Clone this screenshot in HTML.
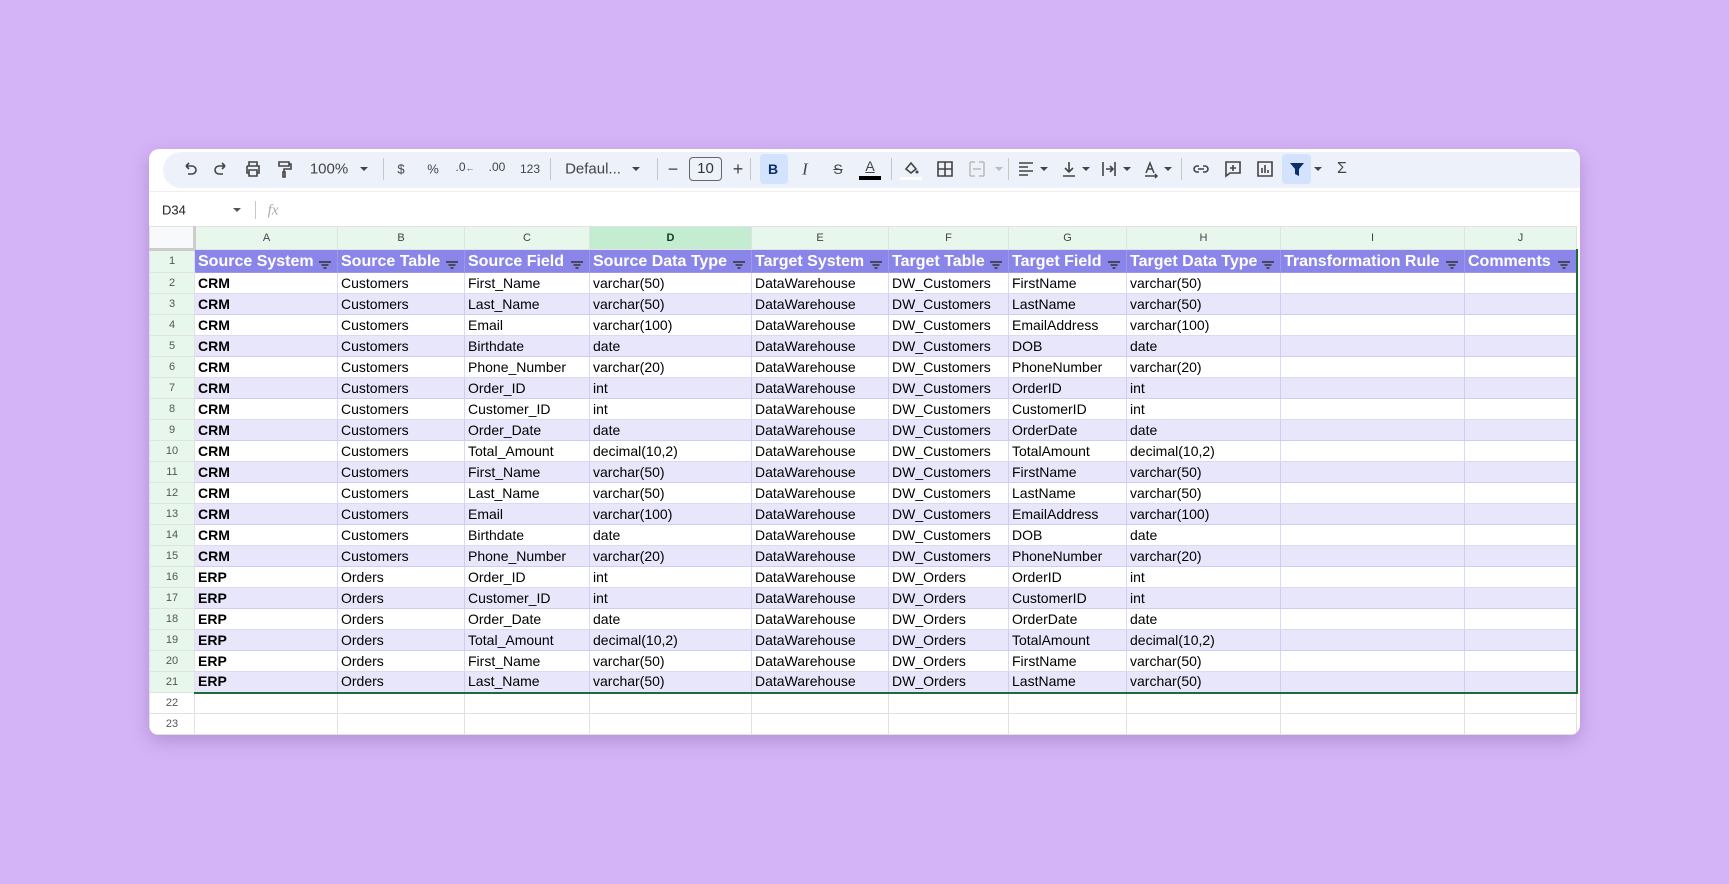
<!DOCTYPE html>
<html><head><meta charset="utf-8"><style>
*{margin:0;padding:0;box-sizing:border-box}
body{width:1729px;height:884px;background:#d4b4f6;font-family:"Liberation Sans",Arial,sans-serif;position:relative;overflow:hidden}
.win{position:absolute;left:149px;top:149px;width:1431px;height:586px;background:#fff;border-radius:10px;overflow:hidden;box-shadow:0 6px 18px rgba(80,40,120,.25)}
.pill{position:absolute;left:14px;top:3px;width:1430px;height:36px;background:#edf1fa;border-radius:18px}
.t{position:absolute;top:20px;transform:translate(-50%,-50%);color:#444;font-size:14px;line-height:1;white-space:nowrap}
.sep{position:absolute;top:9px;width:1px;height:22px;background:#c7c7c7}
.arr{position:absolute;top:18px;width:0;height:0;border-left:4px solid transparent;border-right:4px solid transparent;border-top:4px solid #444;transform:translateX(-50%)}
svg.i{position:absolute;top:10px;width:20px;height:20px;transform:translateX(-50%)}
table{position:absolute;left:0;top:77px;border-collapse:collapse;table-layout:fixed;font-size:14px}
td{height:21px;border:1px solid #e2e2e2;padding:0 3px;white-space:nowrap;overflow:hidden;color:#000;line-height:19px}
td.rh{text-align:center;font-size:11px;color:#555;background:#e7f7ec;padding:0}
tr.ch td{height:23px;background:#e7f7ec;text-align:center;font-size:11px;color:#444}
tr.h td{height:23px;background:#8a86e9;color:#fff;font-weight:bold;font-size:16px;border-color:#9d99ea;position:relative}
tr.h td.rh{color:#555;font-weight:normal;font-size:11px;background:#e7f7ec;border-color:#e2e2e2}
tr.h td span.f{position:absolute;right:6px;top:6px;width:12px;height:10px}
tr.a td{background:#fff;border-color:#dcdaf2}
tr.b td{background:#e8e6fb;border-color:#cfccf1}
tr.a td.rh,tr.b td.rh{background:#e7f7ec;border-color:#e2e2e2}
td.bo{font-weight:bold}
tr.e td{background:#fff}
tr.e td.rh{background:#fff}
</style></head><body>
<div class="win">
<div class="pill"></div>
<svg class="i" style="left:41px" viewBox="0 0 20 20"><path d="M6 7h6a4 4 0 010 8H8M6 7l3-3M6 7l3 3" fill="none" stroke="#444" stroke-width="1.6"/></svg>
<svg class="i" style="left:72px" viewBox="0 0 20 20"><path d="M14 7H8a4 4 0 000 8h4M14 7l-3-3M14 7l-3 3" fill="none" stroke="#444" stroke-width="1.6"/></svg>
<svg class="i" style="left:104px" viewBox="0 0 20 20"><path d="M6 7V3h8v4M4 7h12v7h-2M6 14H4V7M6 11h8v6H6z" fill="none" stroke="#444" stroke-width="1.6"/></svg>
<svg class="i" style="left:135px" viewBox="0 0 20 20"><path d="M5 3h10v4H5zM15 5h2v5h-7v3M9 13h2v5H9z" fill="none" stroke="#444" stroke-width="1.6"/></svg>
<div class="t" style="left:180px;font-size:15px">100%</div><div class="arr" style="left:215px"></div>
<div class="sep" style="left:234px"></div>
<div class="t" style="left:252px;font-size:13px">$</div>
<div class="t" style="left:284px;font-size:13px">%</div>
<div class="t" style="left:316px;font-size:12px;top:18px">.0<span style="font-size:9px">←</span></div>
<div class="t" style="left:348px;font-size:12px;top:18px">.00</div>
<div class="t" style="left:381px;font-size:12px">123</div>
<div class="sep" style="left:401px"></div>
<div class="t" style="left:444px;font-size:15px">Defaul...</div><div class="arr" style="left:487px"></div>
<div class="sep" style="left:508px"></div>
<div class="t" style="left:524px;font-size:18px">−</div>
<div style="position:absolute;left:540px;top:8px;width:33px;height:24px;border:1px solid #666;border-radius:4px;font-size:15px;text-align:center;line-height:22px;color:#333">10</div>
<div class="t" style="left:589px;font-size:18px">+</div>
<div class="sep" style="left:601px"></div>
<div style="position:absolute;left:611px;top:5px;width:28px;height:30px;background:#d3e3fd;border-radius:4px"></div>
<div class="t" style="left:624px;font-weight:bold;font-size:14px;color:#0b2f6b">B</div>
<div class="t" style="left:656px;font-style:italic;font-family:'Liberation Serif',serif;font-size:17px">I</div>
<div class="t" style="left:689px;text-decoration:line-through;font-size:14px">S</div>
<div class="t" style="left:721px;font-size:14px;top:17px;text-decoration:underline">A</div>
<div style="position:absolute;left:710px;top:27px;width:22px;height:4px;background:#000"></div>
<div class="sep" style="left:742px"></div>
<svg class="i" style="left:762px" viewBox="0 0 20 20"><path d="M5 10l5-6 5 6-5 4z" fill="none" stroke="#444" stroke-width="1.6"/><circle cx="16" cy="13" r="1.5" fill="#444"/></svg>
<div style="position:absolute;left:751px;top:28px;width:22px;height:3px;background:#fff"></div>
<svg class="i" style="left:796px" viewBox="0 0 20 20"><path d="M3 3h14v14H3zM10 3v14M3 10h14" fill="none" stroke="#444" stroke-width="1.6"/></svg>
<svg class="i" style="left:828px" viewBox="0 0 20 20"><path d="M3 3h5M12 3h5M3 17h5M12 17h5M3 3v14M17 3v14M6 10h8" fill="none" stroke="#bbb" stroke-width="1.5"/></svg>
<div class="arr" style="left:850px;border-top-color:#bbb"></div>
<div class="sep" style="left:859px"></div>
<svg class="i" style="left:877px" viewBox="0 0 20 20"><path d="M3 4h14M3 8h9M3 12h14M3 16h9" fill="none" stroke="#444" stroke-width="1.6"/></svg><div class="arr" style="left:895px"></div>
<svg class="i" style="left:920px" viewBox="0 0 20 20"><path d="M10 3v10M6 9l4 4 4-4M4 17h12" fill="none" stroke="#444" stroke-width="1.6"/></svg><div class="arr" style="left:937px"></div>
<svg class="i" style="left:960px" viewBox="0 0 20 20"><path d="M4 3v14M16 3v14M7 10h6M11 7l3 3-3 3" fill="none" stroke="#444" stroke-width="1.6"/></svg><div class="arr" style="left:978px"></div>
<svg class="i" style="left:1002px" viewBox="0 0 20 20"><path d="M5 14l4-10 4 10M6.5 10h5M4 17h12M14 15l2 2-2 2" fill="none" stroke="#444" stroke-width="1.5"/></svg><div class="arr" style="left:1019px"></div>
<div class="sep" style="left:1032px"></div>
<svg class="i" style="left:1052px" viewBox="0 0 20 20"><path d="M8 7H6a3 3 0 000 6h2M12 7h2a3 3 0 010 6h-2M7 10h6" fill="none" stroke="#444" stroke-width="1.6"/></svg>
<svg class="i" style="left:1084px" viewBox="0 0 20 20"><path d="M3 3h14v11H7l-4 3zM10 6v6M7 9h6" fill="none" stroke="#444" stroke-width="1.6"/></svg>
<svg class="i" style="left:1116px" viewBox="0 0 20 20"><path d="M3 3h14v14H3zM7 14V9M10 14V6M13 14v-3" fill="none" stroke="#444" stroke-width="1.6"/></svg>
<div style="position:absolute;left:1133px;top:5px;width:29px;height:30px;background:#d3e3fd;border-radius:4px"></div>
<svg class="i" style="left:1148px" viewBox="0 0 20 20"><path d="M3 4h14l-5 6v7l-4-2v-5z" fill="#0b2f6b"/></svg><div class="arr" style="left:1169px"></div>
<div class="t" style="left:1193px;font-size:16px">Σ</div>
<div style="position:absolute;left:0;top:42px;width:100%;height:1px;background:#eee"></div>
<div class="t" style="left:13px;top:61px;transform:translate(0,-50%);font-size:13px;color:#222">D34</div>
<div class="arr" style="left:88px;top:59px;border-top-color:#555"></div>
<div class="sep" style="left:106px;top:52px;height:18px"></div>
<div class="t" style="left:124px;top:62px;font-style:italic;color:#aaa;font-family:'Liberation Serif',serif;font-size:15px">fx</div>
<table>
<colgroup><col style="width:45px"><col style="width:143px"><col style="width:127px"><col style="width:125px"><col style="width:162px"><col style="width:137px"><col style="width:120px"><col style="width:118px"><col style="width:154px"><col style="width:184px"><col style="width:112px"></colgroup>
<tr class="ch"><td style="background:#f8f9fa;border-right:3px solid #ccc;border-bottom:3px solid #ccc"></td><td>A</td><td>B</td><td>C</td><td style="background:#c4ecd1;font-weight:bold;color:#0b3d1d">D</td><td>E</td><td>F</td><td>G</td><td>H</td><td>I</td><td>J</td></tr>
<tr class="h"><td class="rh">1</td><td>Source System<span class="f"><svg width="12" height="10"><path d="M0 2h12M2.5 5h7M4.5 8h3" stroke="#333" stroke-width="1.5"/></svg></span></td><td>Source Table<span class="f"><svg width="12" height="10"><path d="M0 2h12M2.5 5h7M4.5 8h3" stroke="#333" stroke-width="1.5"/></svg></span></td><td>Source Field<span class="f"><svg width="12" height="10"><path d="M0 2h12M2.5 5h7M4.5 8h3" stroke="#333" stroke-width="1.5"/></svg></span></td><td>Source Data Type<span class="f"><svg width="12" height="10"><path d="M0 2h12M2.5 5h7M4.5 8h3" stroke="#333" stroke-width="1.5"/></svg></span></td><td>Target System<span class="f"><svg width="12" height="10"><path d="M0 2h12M2.5 5h7M4.5 8h3" stroke="#333" stroke-width="1.5"/></svg></span></td><td>Target Table<span class="f"><svg width="12" height="10"><path d="M0 2h12M2.5 5h7M4.5 8h3" stroke="#333" stroke-width="1.5"/></svg></span></td><td>Target Field<span class="f"><svg width="12" height="10"><path d="M0 2h12M2.5 5h7M4.5 8h3" stroke="#333" stroke-width="1.5"/></svg></span></td><td>Target Data Type<span class="f"><svg width="12" height="10"><path d="M0 2h12M2.5 5h7M4.5 8h3" stroke="#333" stroke-width="1.5"/></svg></span></td><td>Transformation Rule<span class="f"><svg width="12" height="10"><path d="M0 2h12M2.5 5h7M4.5 8h3" stroke="#333" stroke-width="1.5"/></svg></span></td><td style="border-right:2px solid #1e6b3a">Comments<span class="f"><svg width="12" height="10"><path d="M0 2h12M2.5 5h7M4.5 8h3" stroke="#333" stroke-width="1.5"/></svg></span></td></tr>
<tr class="a"><td class="rh">2</td><td class="bo">CRM</td><td>Customers</td><td>First_Name</td><td>varchar(50)</td><td>DataWarehouse</td><td>DW_Customers</td><td>FirstName</td><td>varchar(50)</td><td></td><td style="border-right:2px solid #1e6b3a"></td></tr>
<tr class="b"><td class="rh">3</td><td class="bo">CRM</td><td>Customers</td><td>Last_Name</td><td>varchar(50)</td><td>DataWarehouse</td><td>DW_Customers</td><td>LastName</td><td>varchar(50)</td><td></td><td style="border-right:2px solid #1e6b3a"></td></tr>
<tr class="a"><td class="rh">4</td><td class="bo">CRM</td><td>Customers</td><td>Email</td><td>varchar(100)</td><td>DataWarehouse</td><td>DW_Customers</td><td>EmailAddress</td><td>varchar(100)</td><td></td><td style="border-right:2px solid #1e6b3a"></td></tr>
<tr class="b"><td class="rh">5</td><td class="bo">CRM</td><td>Customers</td><td>Birthdate</td><td>date</td><td>DataWarehouse</td><td>DW_Customers</td><td>DOB</td><td>date</td><td></td><td style="border-right:2px solid #1e6b3a"></td></tr>
<tr class="a"><td class="rh">6</td><td class="bo">CRM</td><td>Customers</td><td>Phone_Number</td><td>varchar(20)</td><td>DataWarehouse</td><td>DW_Customers</td><td>PhoneNumber</td><td>varchar(20)</td><td></td><td style="border-right:2px solid #1e6b3a"></td></tr>
<tr class="b"><td class="rh">7</td><td class="bo">CRM</td><td>Customers</td><td>Order_ID</td><td>int</td><td>DataWarehouse</td><td>DW_Customers</td><td>OrderID</td><td>int</td><td></td><td style="border-right:2px solid #1e6b3a"></td></tr>
<tr class="a"><td class="rh">8</td><td class="bo">CRM</td><td>Customers</td><td>Customer_ID</td><td>int</td><td>DataWarehouse</td><td>DW_Customers</td><td>CustomerID</td><td>int</td><td></td><td style="border-right:2px solid #1e6b3a"></td></tr>
<tr class="b"><td class="rh">9</td><td class="bo">CRM</td><td>Customers</td><td>Order_Date</td><td>date</td><td>DataWarehouse</td><td>DW_Customers</td><td>OrderDate</td><td>date</td><td></td><td style="border-right:2px solid #1e6b3a"></td></tr>
<tr class="a"><td class="rh">10</td><td class="bo">CRM</td><td>Customers</td><td>Total_Amount</td><td>decimal(10,2)</td><td>DataWarehouse</td><td>DW_Customers</td><td>TotalAmount</td><td>decimal(10,2)</td><td></td><td style="border-right:2px solid #1e6b3a"></td></tr>
<tr class="b"><td class="rh">11</td><td class="bo">CRM</td><td>Customers</td><td>First_Name</td><td>varchar(50)</td><td>DataWarehouse</td><td>DW_Customers</td><td>FirstName</td><td>varchar(50)</td><td></td><td style="border-right:2px solid #1e6b3a"></td></tr>
<tr class="a"><td class="rh">12</td><td class="bo">CRM</td><td>Customers</td><td>Last_Name</td><td>varchar(50)</td><td>DataWarehouse</td><td>DW_Customers</td><td>LastName</td><td>varchar(50)</td><td></td><td style="border-right:2px solid #1e6b3a"></td></tr>
<tr class="b"><td class="rh">13</td><td class="bo">CRM</td><td>Customers</td><td>Email</td><td>varchar(100)</td><td>DataWarehouse</td><td>DW_Customers</td><td>EmailAddress</td><td>varchar(100)</td><td></td><td style="border-right:2px solid #1e6b3a"></td></tr>
<tr class="a"><td class="rh">14</td><td class="bo">CRM</td><td>Customers</td><td>Birthdate</td><td>date</td><td>DataWarehouse</td><td>DW_Customers</td><td>DOB</td><td>date</td><td></td><td style="border-right:2px solid #1e6b3a"></td></tr>
<tr class="b"><td class="rh">15</td><td class="bo">CRM</td><td>Customers</td><td>Phone_Number</td><td>varchar(20)</td><td>DataWarehouse</td><td>DW_Customers</td><td>PhoneNumber</td><td>varchar(20)</td><td></td><td style="border-right:2px solid #1e6b3a"></td></tr>
<tr class="a"><td class="rh">16</td><td class="bo">ERP</td><td>Orders</td><td>Order_ID</td><td>int</td><td>DataWarehouse</td><td>DW_Orders</td><td>OrderID</td><td>int</td><td></td><td style="border-right:2px solid #1e6b3a"></td></tr>
<tr class="b"><td class="rh">17</td><td class="bo">ERP</td><td>Orders</td><td>Customer_ID</td><td>int</td><td>DataWarehouse</td><td>DW_Orders</td><td>CustomerID</td><td>int</td><td></td><td style="border-right:2px solid #1e6b3a"></td></tr>
<tr class="a"><td class="rh">18</td><td class="bo">ERP</td><td>Orders</td><td>Order_Date</td><td>date</td><td>DataWarehouse</td><td>DW_Orders</td><td>OrderDate</td><td>date</td><td></td><td style="border-right:2px solid #1e6b3a"></td></tr>
<tr class="b"><td class="rh">19</td><td class="bo">ERP</td><td>Orders</td><td>Total_Amount</td><td>decimal(10,2)</td><td>DataWarehouse</td><td>DW_Orders</td><td>TotalAmount</td><td>decimal(10,2)</td><td></td><td style="border-right:2px solid #1e6b3a"></td></tr>
<tr class="a"><td class="rh">20</td><td class="bo">ERP</td><td>Orders</td><td>First_Name</td><td>varchar(50)</td><td>DataWarehouse</td><td>DW_Orders</td><td>FirstName</td><td>varchar(50)</td><td></td><td style="border-right:2px solid #1e6b3a"></td></tr>
<tr class="b"><td class="rh">21</td><td class="bo" style="border-bottom:2px solid #1e6b3a">ERP</td><td style="border-bottom:2px solid #1e6b3a">Orders</td><td style="border-bottom:2px solid #1e6b3a">Last_Name</td><td style="border-bottom:2px solid #1e6b3a">varchar(50)</td><td style="border-bottom:2px solid #1e6b3a">DataWarehouse</td><td style="border-bottom:2px solid #1e6b3a">DW_Orders</td><td style="border-bottom:2px solid #1e6b3a">LastName</td><td style="border-bottom:2px solid #1e6b3a">varchar(50)</td><td style="border-bottom:2px solid #1e6b3a"></td><td style="border-right:2px solid #1e6b3a;border-bottom:2px solid #1e6b3a"></td></tr>
<tr class="e"><td class="rh">22</td><td></td><td></td><td></td><td></td><td></td><td></td><td></td><td></td><td></td><td></td></tr>
<tr class="e"><td class="rh">23</td><td></td><td></td><td></td><td></td><td></td><td></td><td></td><td></td><td></td><td></td></tr>
</table>
</div>
</body></html>
